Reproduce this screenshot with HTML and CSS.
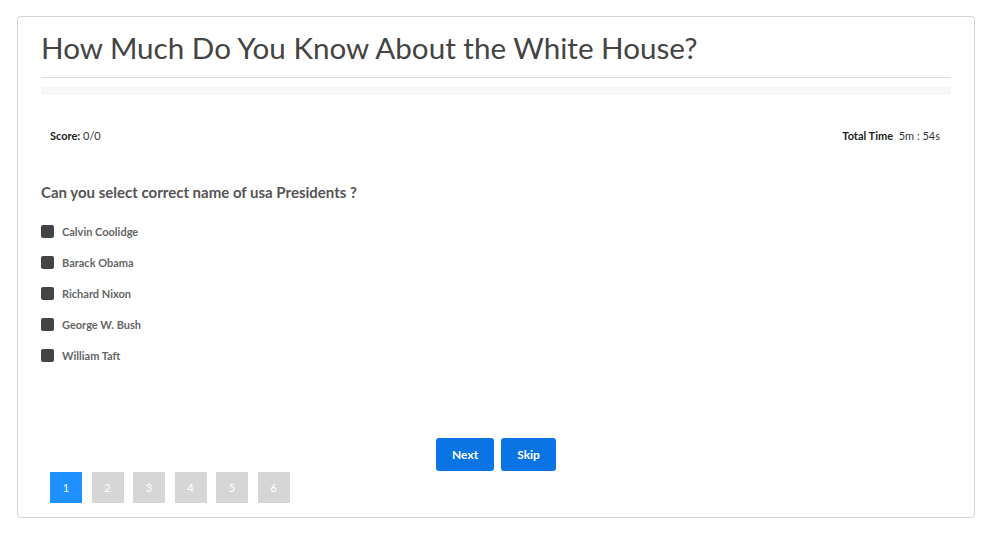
FILE: index.html
```html
<!DOCTYPE html>
<html lang="en">
<head>
  <meta charset="UTF-8" />
  <title>White House Quiz</title>
  <meta name="viewport" content="width=device-width, initial-scale=1.0" />
  <link rel="stylesheet" href="styles.css">
</head>
<body>

<div class="quiz-card">
  <h1 class="quiz-title">How Much Do You Know About the White House?</h1>

  <div class="progress-track"></div>

  <div class="stats-bar">
    <div><strong>Score:</strong> 0/0</div>
    <div><strong>Total Time</strong>&nbsp; 5m : 54s</div>
  </div>

  <h2 class="question">Can you select correct name of usa Presidents ?</h2>

  <ul class="option-list">
    <li><span class="check-box"></span>Calvin Coolidge</li>
    <li><span class="check-box"></span>Barack Obama</li>
    <li><span class="check-box"></span>Richard Nixon</li>
    <li><span class="check-box"></span>George W. Bush</li>
    <li><span class="check-box"></span>William Taft</li>
  </ul>

  <div class="actions">
    <button class="btn">Next</button>
    <button class="btn">Skip</button>
  </div>

  <div class="pager">
    <span class="page active">1</span>
    <span class="page">2</span>
    <span class="page">3</span>
    <span class="page">4</span>
    <span class="page">5</span>
    <span class="page">6</span>
  </div>
</div>

</body>
</html>
```

FILE: styles.css
```css
body {
  font-family: Lato, 'Open Sans', sans-serif;
  margin: 0;
  padding: 16px 25px 0 17px;
  background: #fff;
  color: #555;
}

.quiz-card {
  border: 1px solid #d4d4d4;
  border-radius: 4px;
  padding: 0 23px 13px 23px;
  box-sizing: border-box;
  height: 502px;
}

.quiz-title {
  font-size: 29.6px;
  font-weight: 400;
  color: #444;
  margin: 0;
  padding: 15px 0 13px;
  line-height: 32px;
  border-bottom: 1px solid #ddd;
}

.progress-track {
  height: 8px;
  background: #f7f7f7;
  margin-top: 9px;
}

.stats-bar {
  display: flex;
  justify-content: space-between;
  font-size: 11px;
  color: #333;
  padding: 0 11px 0 9px;
  margin-top: 34px;
}

.stats-bar strong {
  color: #222;
}

.question {
  font-size: 15px;
  font-weight: 700;
  color: #555;
  margin: 41px 0 0;
}

.option-list {
  list-style: none;
  margin: 15px 0 0;
  padding: 0;
}

.option-list li {
  display: flex;
  align-items: center;
  height: 31px;
  font-size: 11px;
  font-weight: 700;
  color: #666;
}

.check-box {
  width: 13px;
  height: 13px;
  background: #444;
  border-radius: 2px;
  margin-right: 8px;
}

.actions {
  display: flex;
  justify-content: center;
  gap: 7px;
  margin-top: 67px;
}

.btn {
  font-family: Lato, sans-serif;
  font-size: 12px;
  font-weight: 700;
  color: #fff;
  background: #0b74e5;
  border: none;
  border-radius: 3px;
  height: 33px;
  padding: 0 16px;
  cursor: pointer;
}

.pager {
  display: flex;
  gap: 9.5px;
  padding-left: 9px;
  margin-top: 1px;
}

.page {
  width: 32px;
  height: 31px;
  display: flex;
  align-items: center;
  justify-content: center;
  background: #d6d6d6;
  color: #fff;
  font-size: 11px;
}

.page.active {
  background: #1e90ff;
}
```
